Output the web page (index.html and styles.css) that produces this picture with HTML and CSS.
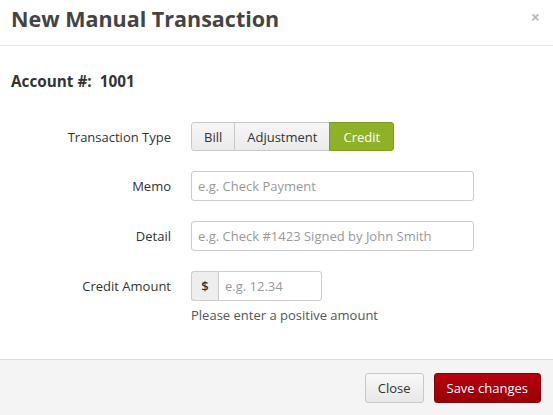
FILE: index.html
```html
<!DOCTYPE html>
<html>
<head>
<meta charset="utf-8">
<link rel="stylesheet" href="styles.css">
</head>
<body>
<div class="modal">
  <div class="modal-header">
    <h3 class="title">New Manual Transaction</h3>
    <span class="close">&times;</span>
  </div>
  <div class="modal-body">
    <h4 class="account">Account #:&nbsp; 1001</h4>
    <div class="form">
      <div class="row">
        <label class="lbl">Transaction Type</label>
        <div class="btn-group">
          <span class="seg">Bill</span><span class="seg">Adjustment</span><span class="seg active">Credit</span>
        </div>
      </div>
      <div class="row">
        <label class="lbl">Memo</label>
        <input class="input wide" placeholder="e.g. Check Payment">
      </div>
      <div class="row">
        <label class="lbl">Detail</label>
        <input class="input wide" placeholder="e.g. Check #1423 Signed by John Smith">
      </div>
      <div class="row amount-row">
        <label class="lbl">Credit Amount</label>
        <div class="ctrl">
          <div class="input-group">
            <span class="addon">$</span><input class="input amount" placeholder="e.g. 12.34">
          </div>
          <p class="help">Please enter a positive amount</p>
        </div>
      </div>
    </div>
  </div>
  <div class="modal-footer">
    <button class="btn">Close</button>
    <button class="btn primary">Save changes</button>
  </div>
</div>
</body>
</html>
```
FILE: styles.css
```css
* { box-sizing: border-box; }
html, body { margin: 0; padding: 0; background: #fff; }
body { font-family: "Open Sans", "Liberation Sans", sans-serif; color: #333; width: 553px; height: 415px; overflow: hidden; }
.modal { display: flex; flex-direction: column; height: 415px; }
.modal-header { height: 46px; border-bottom: 1px solid #e5e5e5; display: flex; align-items: center; justify-content: space-between; padding: 0 13px 0 11px; }
.title { margin: 0; font-size: 21.5px; font-weight: 700; color: #444; line-height: 30px; position: relative; top: -4px; }
.close { font-size: 16px; font-weight: 700; color: #bbb; line-height: 1; position: relative; top: -6px; }
.modal-body { flex: 1; padding: 24px 11px 0 11px; }
.account { margin: 0 0 30px 0; font-size: 15.3px; font-weight: 700; color: #333; line-height: 22px; }
.form { display: flex; flex-direction: column; gap: 20px; }
.row { display: grid; grid-template-columns: 160px auto; column-gap: 20px; align-items: center; }
.row.amount-row { align-items: start; }
.amount-row .lbl { line-height: 30px; }
.lbl { text-align: right; font-size: 13px; color: #333; }
.btn-group { display: flex; height: 29px; }
.seg { display: flex; align-items: center; padding: 0 12px; font-size: 13px; color: #333; background: linear-gradient(#f6f6f6, #ebebeb); border: 1px solid #c8c8c8; margin-left: -1px; }
.seg:first-child { margin-left: 0; border-radius: 3px 0 0 3px; }
.seg.active { background: #8fb128; border-color: #7d9c20; color: #fff; border-radius: 0 3px 3px 0; padding: 0 13px; }
.input { height: 30px; border: 1px solid #ccc; border-radius: 3px; padding: 0 6px; font-family: inherit; font-size: 13px; color: #555; background: #fff; outline: none; }
.input::placeholder { color: #999; }
.wide { width: 283px; }
.input-group { display: flex; height: 30px; }
.addon { width: 27px; display: flex; align-items: center; justify-content: center; font-size: 13px; font-weight: 600; color: #333; background: #eee; border: 1px solid #ccc; border-right: 0; border-radius: 3px 0 0 3px; }
.amount { width: 104px; border-radius: 0 3px 3px 0; }
.help { margin: 5px 0 0 0; font-size: 13px; color: #555; line-height: 18px; }
.modal-footer { height: 56px; background: #f4f4f4; border-top: 1px solid #ddd; display: flex; justify-content: flex-end; align-items: center; gap: 10px; padding: 0 12px 0 0; }
.btn { height: 30px; padding: 0 12px; font-family: inherit; font-size: 13px; border-radius: 3px; border: 1px solid #c8c8c8; background: linear-gradient(#f8f8f8, #e8e8e8); color: #333; }
.btn.primary { background: linear-gradient(#b8000e, #980008); border-color: #8a0008; color: #fff; padding: 0 12px; }
```
